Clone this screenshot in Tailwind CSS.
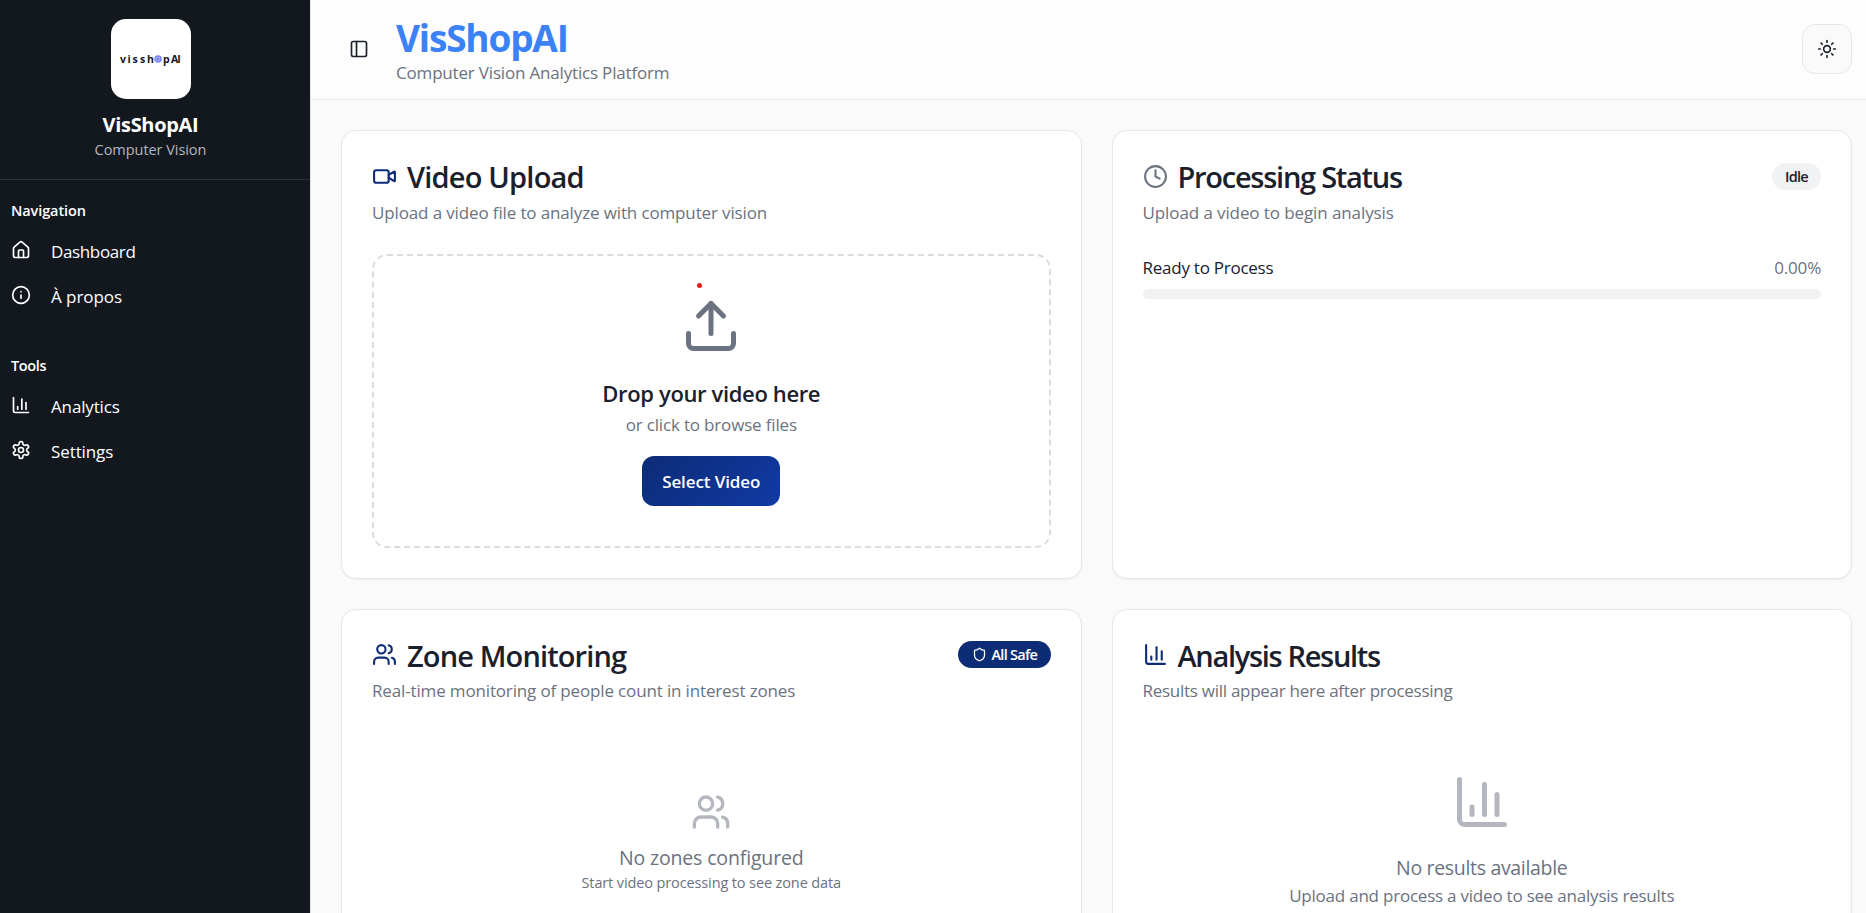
<!DOCTYPE html>
<html lang="fr">
<head>
<meta charset="utf-8">
<title>VisShopAI</title>
<script src="https://cdn.jsdelivr.net/npm/@tailwindcss/browser@4"></script>
</head>
<body class="h-screen overflow-hidden bg-[#fafafa] font-['Open_Sans','Noto_Sans',sans-serif] text-[#1a202c]">
<svg class="hidden">
  <defs>
    <symbol id="users" viewBox="0 0 24 24"><path d="M16 21v-2a4 4 0 0 0-4-4H6a4 4 0 0 0-4 4v2"/><circle cx="9" cy="7" r="4"/><path d="M22 21v-2a4 4 0 0 0-3-3.87"/><path d="M16 3.13a4 4 0 0 1 0 7.75"/></symbol>
    <symbol id="chart" viewBox="0 0 24 24"><path d="M3 3v16a2 2 0 0 0 2 2h16"/><path d="M18 17V9"/><path d="M13 17V5"/><path d="M8 17v-3"/></symbol>
  </defs>
</svg>
<div class="flex h-full">
  <aside class="w-[311px] shrink-0 border-r border-[#e5e7eb] bg-[#13181f] text-white">
    <div class="flex flex-col items-center border-b border-[#292f3d] pt-[19px] pr-[9px] pb-[19px]">
      <div class="flex h-20 w-20 items-center rounded-[15px] bg-white pl-[9.5px] text-[10.5px] leading-[14px] font-bold text-[#15151c]">
        <span class="w-[7.5px]">v</span><span class="w-[5px]">i</span><span class="w-[7.5px]">s</span><span class="w-[7px]">s</span><span class="w-[7px]">h</span>
        <svg class="mr-[1px] h-[8px] w-[8px] shrink-0" viewBox="0 0 8 8"><circle cx="4" cy="4" r="3.1" fill="#a3a9f5" stroke="#767ee8" stroke-width="1.3"/><circle cx="4" cy="4" r="1" fill="#5f68dc"/></svg>
        <span class="w-[8px]">p</span><span class="tracking-[-0.9px]">AI</span>
      </div>
      <h2 class="mt-[13px] text-[20px] leading-[25px] font-bold tracking-[-0.32px]">VisShopAI</h2>
      <p class="mt-[3px] text-[14.5px] leading-5 tracking-[-0.05px] text-[#b4b6b9]">Computer Vision</p>
    </div>
    <nav class="pt-[21px] pl-[11px]">
      <h3 class="text-[14.5px] leading-5 font-semibold tracking-[-0.1px]">Navigation</h3>
      <ul class="mt-2 text-[17px] leading-[25px]">
        <li class="flex h-[45px] items-center gap-5">
          <svg class="mb-[3px] h-5 w-5" viewBox="0 0 24 24" fill="none" stroke="currentColor" stroke-width="2" stroke-linecap="round" stroke-linejoin="round"><path d="M15 21v-8a1 1 0 0 0-1-1h-4a1 1 0 0 0-1 1v8"/><path d="M3 10a2 2 0 0 1 .709-1.528l7-5.999a2 2 0 0 1 2.582 0l7 5.999A2 2 0 0 1 21 10v9a2 2 0 0 1-2 2H5a2 2 0 0 1-2-2z"/></svg>
          <span class="tracking-[-0.36px]">Dashboard</span>
        </li>
        <li class="flex h-[45px] items-center gap-5">
          <svg class="mb-[3px] h-5 w-5" viewBox="0 0 24 24" fill="none" stroke="currentColor" stroke-width="2" stroke-linecap="round" stroke-linejoin="round"><circle cx="12" cy="12" r="10"/><path d="M12 16v-4"/><path d="M12 8h.01"/></svg>
          <span class="tracking-[-0.06px]">À propos</span>
        </li>
      </ul>
      <h3 class="mt-[37px] text-[14.5px] leading-5 font-semibold tracking-[-0.35px]">Tools</h3>
      <ul class="mt-2 text-[17px] leading-[25px]">
        <li class="flex h-[45px] items-center gap-5">
          <svg class="mb-[3px] h-5 w-5" fill="none" stroke="currentColor" stroke-width="2" stroke-linecap="round" stroke-linejoin="round"><use href="#chart"/></svg>
          <span class="tracking-[-0.15px]">Analytics</span>
        </li>
        <li class="flex h-[45px] items-center gap-5">
          <svg class="mb-[3px] h-5 w-5" viewBox="0 0 24 24" fill="none" stroke="currentColor" stroke-width="2" stroke-linecap="round" stroke-linejoin="round"><path d="M12.22 2h-.44a2 2 0 0 0-2 2v.18a2 2 0 0 1-1 1.73l-.43.25a2 2 0 0 1-2 0l-.15-.08a2 2 0 0 0-2.73.73l-.22.38a2 2 0 0 0 .73 2.73l.15.1a2 2 0 0 1 1 1.72v.51a2 2 0 0 1-1 1.74l-.15.09a2 2 0 0 0-.73 2.73l.22.38a2 2 0 0 0 2.73.73l.15-.08a2 2 0 0 1 2 0l.43.25a2 2 0 0 1 1 1.73V20a2 2 0 0 0 2 2h.44a2 2 0 0 0 2-2v-.18a2 2 0 0 1 1-1.73l.43-.25a2 2 0 0 1 2 0l.15.08a2 2 0 0 0 2.73-.73l.22-.39a2 2 0 0 0-.73-2.73l-.15-.08a2 2 0 0 1-1-1.74v-.5a2 2 0 0 1 1-1.74l.15-.09a2 2 0 0 0 .73-2.73l-.22-.38a2 2 0 0 0-2.73-.73l-.15.08a2 2 0 0 1-2 0l-.43-.25a2 2 0 0 1-1-1.73V4a2 2 0 0 0-2-2z"/><circle cx="12" cy="12" r="3"/></svg>
          <span class="tracking-[-0.1px]">Settings</span>
        </li>
      </ul>
    </nav>
  </aside>

  <div class="flex min-w-0 flex-1 flex-col">
    <header class="flex h-[100px] shrink-0 items-center border-b border-[#e5e7eb] bg-[#fdfdfd] pr-[14px] pb-px pl-[38px]">
      <svg class="h-5 w-5" viewBox="0 0 24 24" fill="none" stroke="currentColor" stroke-width="2" stroke-linecap="round" stroke-linejoin="round"><rect width="18" height="18" x="3" y="3" rx="2"/><path d="M9 3v18"/></svg>
      <div class="mt-[4px] ml-[27px]">
        <h1 class="text-[37px] leading-10 font-bold tracking-[-1.2px] text-[#3b82f6]">VisShopAI</h1>
        <p class="mt-0.5 text-[17px] leading-[25px] tracking-[-0.18px] text-[#6b7280]">Computer Vision Analytics Platform</p>
      </div>
      <button class="ml-auto flex h-[50px] w-[50px] items-center justify-center rounded-[13px] border border-[#e5e7eb] bg-[#fafafa]">
        <svg class="h-5 w-5" viewBox="0 0 24 24" fill="none" stroke="currentColor" stroke-width="2" stroke-linecap="round" stroke-linejoin="round"><circle cx="12" cy="12" r="4"/><path d="M12 2v2"/><path d="M12 20v2"/><path d="m4.93 4.93 1.41 1.41"/><path d="m17.66 17.66 1.41 1.41"/><path d="M2 12h2"/><path d="M20 12h2"/><path d="m6.34 17.66-1.41 1.41"/><path d="m19.07 4.93-1.41 1.41"/></svg>
      </button>
    </header>

    <main class="grid shrink-0 auto-rows-[449px] grid-cols-2 gap-[30px] pt-[30px] pr-[14px] pl-[30px]">
      <section class="rounded-[15px] border border-[#e5e7eb] bg-white p-[30px] shadow-xs">
        <div class="flex h-[30px] items-center gap-2.5">
          <svg class="h-[25px] w-[25px] text-[#0c2c76]" viewBox="0 0 24 24" fill="none" stroke="currentColor" stroke-width="2" stroke-linecap="round" stroke-linejoin="round"><path d="m16 13 5.223 3.482a.5.5 0 0 0 .777-.416V7.87a.5.5 0 0 0-.752-.432L16 10.5"/><rect x="2" y="6" width="14" height="12" rx="2"/></svg>
          <h2 class="pt-0.5 text-[29px] leading-[30px] font-semibold tracking-[-0.8px]">Video Upload</h2>
        </div>
        <p class="mt-[9px] text-[17px] leading-[25px] tracking-[-0.134px] text-[#6b7280]">Upload a video file to analyze with computer vision</p>
        <div class="relative mt-[29px] flex h-[294px] flex-col items-center rounded-[15px] border-2 border-dashed border-[#dbdce0] pt-10">
          <span class="absolute top-[27px] left-[323px] h-[5px] w-[5px] rounded-full bg-[#e81c1c]"></span>
          <svg class="h-[60px] w-[60px] text-[#6b7280]" viewBox="0 0 24 24" fill="none" stroke="currentColor" stroke-width="2" stroke-linecap="round" stroke-linejoin="round"><path d="M21 15v4a2 2 0 0 1-2 2H5a2 2 0 0 1-2-2v-4"/><path d="m17 8-5-5-5 5"/><path d="M12 3v12"/></svg>
          <h3 class="mt-5 text-[22px] leading-[35px] font-semibold tracking-[-0.36px]">Drop your video here</h3>
          <p class="mt-px text-[17px] leading-[25px] tracking-[-0.17px] text-[#6b7280]">or click to browse files</p>
          <button class="mt-[19px] h-[50px] w-[138px] rounded-[12px] bg-linear-135 from-[#0c2c76] to-[#103aa5] text-[17px] leading-[25px] font-semibold tracking-[-0.1px] text-white">Select Video</button>
        </div>
      </section>

      <section class="rounded-[15px] border border-[#e5e7eb] bg-white p-[30px] shadow-xs">
        <div class="flex h-[30px] items-center gap-2.5">
          <svg class="h-[25px] w-[25px] text-[#6b7280]" viewBox="0 0 24 24" fill="none" stroke="currentColor" stroke-width="2" stroke-linecap="round" stroke-linejoin="round"><circle cx="12" cy="12" r="10"/><path d="M12 6v6l4 2"/></svg>
          <h2 class="pt-0.5 text-[29px] leading-[30px] font-semibold tracking-[-1.26px]">Processing Status</h2>
          <span class="ml-auto flex h-[27px] w-[49px] items-center justify-center rounded-full bg-[#f1f2f4] pt-px text-[14.5px] leading-5 font-semibold tracking-[-0.75px]">Idle</span>
        </div>
        <p class="mt-[9px] text-[17px] leading-[25px] tracking-[-0.1px] text-[#6b7280]">Upload a video to begin analysis</p>
        <div class="mt-[30px] flex justify-between text-[17px] leading-[25px]">
          <span class="tracking-[-0.25px]">Ready to Process</span>
          <span class="tracking-[-0.2px] text-[#6b7280]">0.00%</span>
        </div>
        <div class="mt-[9px] h-2.5 rounded-full bg-[#f1f2f4]"></div>
      </section>

      <section class="rounded-[15px] border border-[#e5e7eb] bg-white p-[30px] shadow-xs">
        <div class="flex h-[30px] items-center gap-2.5">
          <svg class="mb-px h-[25px] w-[25px] text-[#0c2c76]" fill="none" stroke="currentColor" stroke-width="2" stroke-linecap="round" stroke-linejoin="round"><use href="#users"/></svg>
          <h2 class="pt-0.5 text-[29px] leading-[30px] font-semibold tracking-[-0.87px]">Zone Monitoring</h2>
          <span class="mb-px ml-auto flex h-[27px] w-[93px] items-center gap-[5px] rounded-full bg-[#0c2c76] pl-[14px] text-[14.5px] leading-5 font-semibold tracking-[-0.73px] text-white">
            <svg class="h-[15px] w-[15px]" viewBox="0 0 24 24" fill="none" stroke="currentColor" stroke-width="2" stroke-linecap="round" stroke-linejoin="round"><path d="M20 13c0 5-3.5 7.5-7.66 8.95a1 1 0 0 1-.67-.01C7.5 20.5 4 18 4 13V6a1 1 0 0 1 1-1c2 0 4.5-1.2 6.24-2.72a1.17 1.17 0 0 1 1.52 0C14.51 3.81 17 5 19 5a1 1 0 0 1 1 1z"/></svg>
            <span class="pt-px">All Safe</span>
          </span>
        </div>
        <p class="mt-2 text-[17px] leading-[25px] tracking-[-0.15px] text-[#6b7280]">Real-time monitoring of people count in interest zones</p>
        <div class="mt-[89px] flex flex-col items-center text-[#6b7280]">
          <svg class="h-10 w-10 opacity-50" fill="none" stroke="currentColor" stroke-width="2" stroke-linecap="round" stroke-linejoin="round"><use href="#users"/></svg>
          <p class="mt-[11px] text-[19.5px] leading-[30px] tracking-[-0.15px]">No zones configured</p>
          <p class="text-[14.5px] leading-5 tracking-[-0.12px]">Start video processing to see zone data</p>
        </div>
      </section>

      <section class="rounded-[15px] border border-[#e5e7eb] bg-white p-[30px] shadow-xs">
        <div class="flex h-[30px] items-center gap-2.5">
          <svg class="mb-px h-[25px] w-[25px] text-[#0c2c76]" fill="none" stroke="currentColor" stroke-width="2" stroke-linecap="round" stroke-linejoin="round"><use href="#chart"/></svg>
          <h2 class="pt-0.5 text-[29px] leading-[30px] font-semibold tracking-[-1.32px]">Analysis Results</h2>
        </div>
        <p class="mt-2 text-[17px] leading-[25px] tracking-[-0.27px] text-[#6b7280]">Results will appear here after processing</p>
        <div class="mt-[69px] flex flex-col items-center text-[#6b7280]">
          <svg class="h-[60px] w-[60px] opacity-50" fill="none" stroke="currentColor" stroke-width="2" stroke-linecap="round" stroke-linejoin="round"><use href="#chart"/></svg>
          <p class="mt-[21px] text-[19.5px] leading-[30px] tracking-[-0.32px]">No results available</p>
          <p class="text-[17px] leading-[25px] tracking-[-0.22px]">Upload and process a video to see analysis results</p>
        </div>
      </section>
    </main>
  </div>
</div>
</body>
</html>
